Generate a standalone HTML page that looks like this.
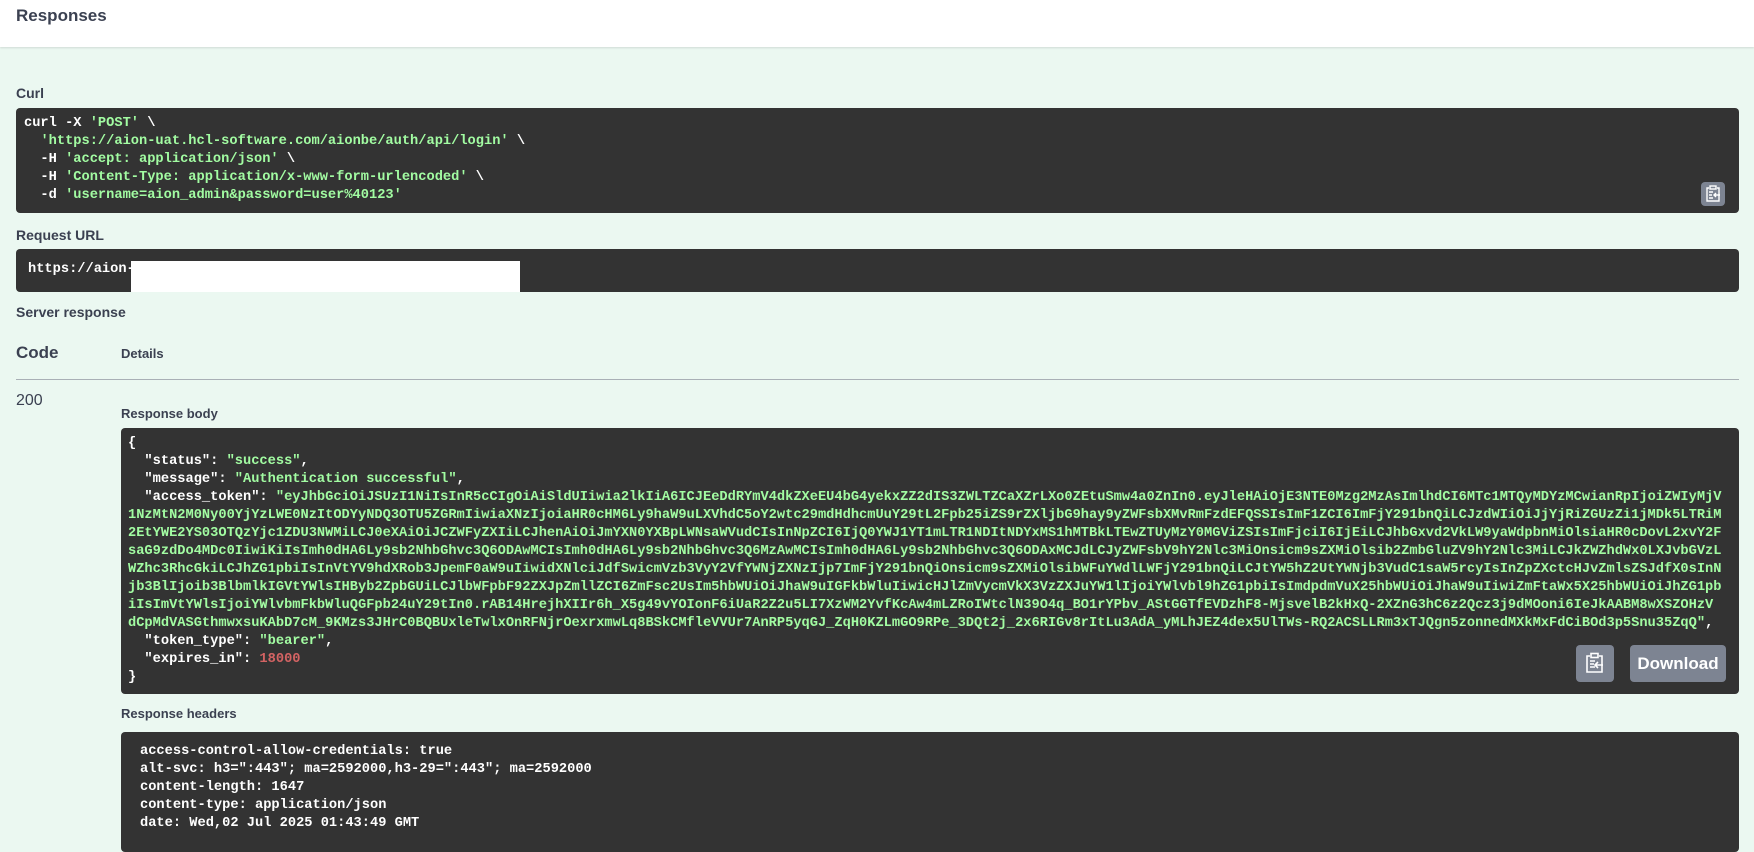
<!DOCTYPE html>
<html><head><meta charset="utf-8">
<style>
*{margin:0;padding:0;box-sizing:border-box}
html,body{width:1754px;height:834px;overflow:hidden;background:#ebf8f1;font-family:"Liberation Sans",Arial,sans-serif;color:#3b4151}
.hdr{position:absolute;left:0;top:0;width:1754px;height:47px;background:#fff;box-shadow:0 1px 2px rgba(0,0,0,.12)}
.hdr span{position:absolute;left:16px;top:6px;font-size:17px;font-weight:bold}
.lbl{position:absolute;font-size:14px;font-weight:bold;color:#3b4151}
.blk{position:absolute;background:#333;border-radius:4px;color:#fff;font-family:"Liberation Mono",monospace;font-size:13.7px;font-weight:bold;line-height:18px;white-space:pre;overflow:hidden}
.s{color:#a2fca2}.n{color:#d36363}
.btn{position:absolute;background:#7d8492;border-radius:4px;color:#fff}
</style></head><body>
<div class="hdr"><span>Responses</span></div>
<div class="lbl" style="left:16px;top:85px">Curl</div>
<div class="blk" style="left:16px;top:108px;width:1723px;height:105px;padding:7px 0 0 8px">curl -X <span class="s">'POST'</span> \
  <span class="s">'https://aion-uat.hcl-software.com/aionbe/auth/api/login'</span> \
  -H <span class="s">'accept: application/json'</span> \
  -H <span class="s">'Content-Type: application/x-www-form-urlencoded'</span> \
  -d <span class="s">'username=aion_admin&amp;password=user%40123'</span></div>
<div class="btn" style="left:1701px;top:182px;width:24px;height:24px">
<svg width="24" height="24" viewBox="0 0 24 24"><g fill="none" stroke="#fff" stroke-width="1.4"><path d="M8 6H6v13h12V6h-2"/><rect x="9" y="4" width="6" height="3"/><path d="M8 10h4M8 13h3M8 16h4M19 13h-6m2-2-2 2 2 2"/></g></svg></div>
<div class="lbl" style="left:16px;top:227px">Request URL</div>
<div class="blk" style="left:16px;top:249px;width:1723px;height:43px;padding:12px 0 0 12px">https://aion-</div>
<div style="position:absolute;left:131px;top:261px;width:389px;height:31px;background:#fff"></div>
<div class="lbl" style="left:16px;top:304px">Server response</div>
<div class="lbl" style="left:16px;top:343px;font-size:17px">Code</div>
<div class="lbl" style="left:121px;top:346px;font-size:13px">Details</div>
<div style="position:absolute;left:16px;top:379px;width:1723px;height:1px;background:#a9b0b6"></div>
<div style="position:absolute;left:16px;top:392px;font-size:16px">200</div>
<div class="lbl" style="left:121px;top:406px;font-size:13px">Response body</div>
<div class="blk" style="left:121px;top:428px;width:1618px;height:266px;padding:7px 0 0 7px">{
  "status": <span class="s">"success"</span>,
  "message": <span class="s">"Authentication successful"</span>,
  "access_token": <span class="s">"eyJhbGciOiJSUzI1NiIsInR5cCIgOiAiSldUIiwia2lkIiA6ICJEeDdRYmV4dkZXeEU4bG4yekxZZ2dIS3ZWLTZCaXZrLXo0ZEtuSmw4a0ZnIn0.eyJleHAiOjE3NTE0Mzg2MzAsImlhdCI6MTc1MTQyMDYzMCwianRpIjoiZWIyMjV
1NzMtN2M0Ny00YjYzLWE0NzItODYyNDQ3OTU5ZGRmIiwiaXNzIjoiaHR0cHM6Ly9haW9uLXVhdC5oY2wtc29mdHdhcmUuY29tL2Fpb25iZS9rZXljbG9hay9yZWFsbXMvRmFzdEFQSSIsImF1ZCI6ImFjY291bnQiLCJzdWIiOiJjYjRiZGUzZi1jMDk5LTRiM
2EtYWE2YS03OTQzYjc1ZDU3NWMiLCJ0eXAiOiJCZWFyZXIiLCJhenAiOiJmYXN0YXBpLWNsaWVudCIsInNpZCI6IjQ0YWJ1YT1mLTR1NDItNDYxMS1hMTBkLTEwZTUyMzY0MGViZSIsImFjciI6IjEiLCJhbGxvd2VkLW9yaWdpbnMiOlsiaHR0cDovL2xvY2F
saG9zdDo4MDc0IiwiKiIsImh0dHA6Ly9sb2NhbGhvc3Q6ODAwMCIsImh0dHA6Ly9sb2NhbGhvc3Q6MzAwMCIsImh0dHA6Ly9sb2NhbGhvc3Q6ODAxMCJdLCJyZWFsbV9hY2Nlc3MiOnsicm9sZXMiOlsib2ZmbGluZV9hY2Nlc3MiLCJkZWZhdWx0LXJvbGVzL
WZhc3RhcGkiLCJhZG1pbiIsInVtYV9hdXRob3JpemF0aW9uIiwidXNlciJdfSwicmVzb3VyY2VfYWNjZXNzIjp7ImFjY291bnQiOnsicm9sZXMiOlsibWFuYWdlLWFjY291bnQiLCJtYW5hZ2UtYWNjb3VudC1saW5rcyIsInZpZXctcHJvZmlsZSJdfX0sInN
jb3BlIjoib3BlbmlkIGVtYWlsIHByb2ZpbGUiLCJlbWFpbF92ZXJpZmllZCI6ZmFsc2UsIm5hbWUiOiJhaW9uIGFkbWluIiwicHJlZmVycmVkX3VzZXJuYW1lIjoiYWlvbl9hZG1pbiIsImdpdmVuX25hbWUiOiJhaW9uIiwiZmFtaWx5X25hbWUiOiJhZG1pb
iIsImVtYWlsIjoiYWlvbmFkbWluQGFpb24uY29tIn0.rAB14HrejhXIIr6h_X5g49vYOIonF6iUaR2Z2u5LI7XzWM2YvfKcAw4mLZRoIWtclN39O4q_BO1rYPbv_AStGGTfEVDzhF8-MjsvelB2kHxQ-2XZnG3hC6z2Qcz3j9dMOoni6IeJkAABM8wXSZOHzV
dCpMdVASGthmwxsuKAbD7cM_9KMzs3JHrC0BQBUxleTwlxOnRFNjrOexrxmwLq8BSkCMfleVVUr7AnRP5yqGJ_ZqH0KZLmGO9RPe_3DQt2j_2x6RIGv8rItLu3AdA_yMLhJEZ4dex5UlTWs-RQ2ACSLLRm3xTJQgn5zonnedMXkMxFdCiBOd3p5Snu35ZqQ"</span>,
  "token_type": <span class="s">"bearer"</span>,
  "expires_in": <span class="n">18000</span>
}</div>
<div class="btn" style="left:1576px;top:645px;width:38px;height:37px">
<svg width="38" height="37" viewBox="0 0 38 37"><g fill="none" stroke="#fff" stroke-width="1.6"><path d="M14 11h-3v16h15V11h-3"/><rect x="15" y="8.5" width="7" height="4"/><path d="M14 16h5M14 19h4M14 22h5M27 20h-8m3-3-3 3 3 3"/></g></svg></div>
<div class="btn" style="left:1630px;top:645px;width:96px;height:37px;font-size:17px;font-weight:bold;text-align:center;line-height:37px">Download</div>
<div class="lbl" style="left:121px;top:706px;font-size:13px">Response headers</div>
<div class="blk" style="left:121px;top:732px;width:1618px;height:120px;padding:11px 0 0 19px">access-control-allow-credentials: true
alt-svc: h3=":443"; ma=2592000,h3-29=":443"; ma=2592000
content-length: 1647
content-type: application/json
date: Wed,02 Jul 2025 01:43:49 GMT</div>
</body></html>
